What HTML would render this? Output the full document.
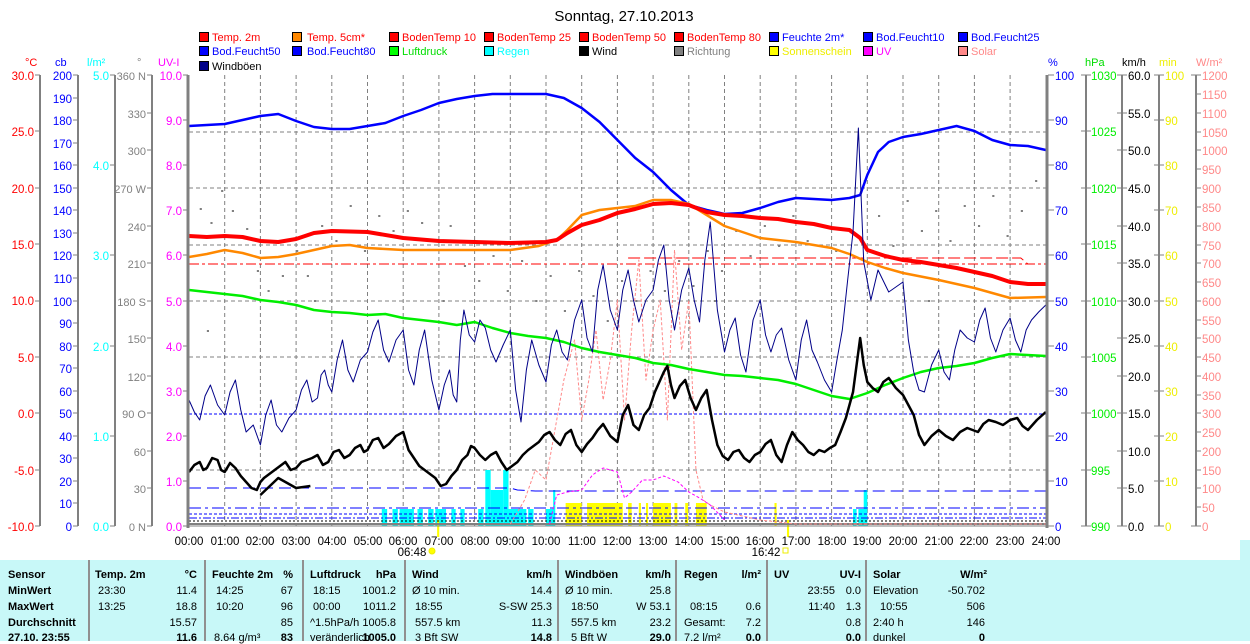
<!DOCTYPE html>
<html><head><meta charset="utf-8"><style>
body{margin:0;background:#fff;width:1250px;height:641px;overflow:hidden;font-family:"Liberation Sans",sans-serif}
svg text{font-family:"Liberation Sans",sans-serif}
.tb{position:absolute;left:0;top:560px;width:1240px;height:81px;background:#c8f8f8;font-size:11px}
.tb div{position:absolute;white-space:nowrap}
.tb div.r{transform:translateX(-100%)}
.b{font-weight:bold}
</style></head><body>
<svg width="1250" height="641" style="position:absolute;left:0;top:0" font-size="11">
<text x="624" y="21" text-anchor="middle" style="font-size:15px">Sonntag, 27.10.2013</text>
<g>
<g stroke="#000" stroke-width="1">
<rect x="199.5" y="32.5" width="9" height="9" fill="#f00"/><rect x="292.5" y="32.5" width="9" height="9" fill="#f80"/><rect x="389.5" y="32.5" width="9" height="9" fill="#f00"/><rect x="484.5" y="32.5" width="9" height="9" fill="#f00"/><rect x="579.5" y="32.5" width="9" height="9" fill="#f00"/><rect x="674.5" y="32.5" width="9" height="9" fill="#f00"/><rect x="769.5" y="32.5" width="9" height="9" fill="#00f"/><rect x="863.5" y="32.5" width="9" height="9" fill="#00f"/><rect x="958.5" y="32.5" width="9" height="9" fill="#00f"/>
<rect x="199.5" y="46.5" width="9" height="9" fill="#00f"/><rect x="292.5" y="46.5" width="9" height="9" fill="#00f"/><rect x="389.5" y="46.5" width="9" height="9" fill="#0f0"/><rect x="484.5" y="46.5" width="9" height="9" fill="#0ff"/><rect x="579.5" y="46.5" width="9" height="9" fill="#000"/><rect x="674.5" y="46.5" width="9" height="9" fill="#808080"/><rect x="769.5" y="46.5" width="9" height="9" fill="#ff0"/><rect x="863.5" y="46.5" width="9" height="9" fill="#f0f"/><rect x="958.5" y="46.5" width="9" height="9" fill="#f88"/>
<rect x="199.5" y="61.5" width="9" height="9" fill="#008"/></g>
<text x="212" y="41" fill="#f00">Temp. 2m</text><text x="307" y="41" fill="#f00">Temp. 5cm*</text><text x="402" y="41" fill="#f00">BodenTemp 10</text><text x="497" y="41" fill="#f00">BodenTemp 25</text><text x="592" y="41" fill="#f00">BodenTemp 50</text><text x="687" y="41" fill="#f00">BodenTemp 80</text><text x="782" y="41" fill="#00f">Feuchte 2m*</text><text x="876" y="41" fill="#00f">Bod.Feucht10</text><text x="971" y="41" fill="#00f">Bod.Feucht25</text>
<text x="212" y="55" fill="#00f">Bod.Feucht50</text><text x="307" y="55" fill="#00f">Bod.Feucht80</text><text x="402" y="55" fill="#0d0">Luftdruck</text><text x="497" y="55" fill="#0ff">Regen</text><text x="592" y="55" fill="#000">Wind</text><text x="687" y="55" fill="#808080">Richtung</text><text x="782" y="55" fill="#ee0">Sonnenschein</text><text x="876" y="55" fill="#f0f">UV</text><text x="971" y="55" fill="#f88">Solar</text>
<text x="212" y="70" fill="#000">Windböen</text>
</g>
<text x="25" y="66" fill="#f00">°C</text><text x="55" y="66" fill="#00f">cb</text><text x="87" y="66" fill="#0ff">l/m²</text><text x="137" y="66" fill="#808080">°</text><text x="158" y="66" fill="#f0f">UV-I</text>
<text x="1048" y="66" fill="#00f">%</text><text x="1085" y="66" fill="#0d0">hPa</text><text x="1122" y="66" fill="#000">km/h</text><text x="1159" y="66" fill="#ee0">min</text><text x="1196" y="66" fill="#f88">W/m²</text>
<g stroke="#808080" stroke-width="2"><line x1="40" y1="75" x2="40" y2="526"/><line x1="78" y1="75" x2="78" y2="526"/><line x1="115" y1="75" x2="115" y2="526"/><line x1="152" y1="75" x2="152" y2="526"/><line x1="1086" y1="75" x2="1086" y2="526"/><line x1="1122" y1="75" x2="1122" y2="526"/><line x1="1159" y1="75" x2="1159" y2="526"/><line x1="1196" y1="75" x2="1196" y2="526"/></g>
<g stroke="#808080" stroke-dasharray="4,3" stroke-width="1">
<line x1="189" y1="132" x2="1046" y2="132"/><line x1="189" y1="188" x2="1046" y2="188"/><line x1="189" y1="245" x2="1046" y2="245"/><line x1="189" y1="301" x2="1046" y2="301"/><line x1="189" y1="357" x2="1046" y2="357"/><line x1="189" y1="470" x2="1046" y2="470"/>
</g>
<line x1="189" y1="414" x2="1046" y2="414" stroke="#00f" stroke-dasharray="3,2"/>
<g transform="translate(189,0) scale(35.7,1)" fill="none" stroke-linejoin="round">
<g stroke="#808080" stroke-dasharray="4,3">
<line x1="1" y1="75" x2="1" y2="526" vector-effect="non-scaling-stroke"/><line x1="2" y1="75" x2="2" y2="526" vector-effect="non-scaling-stroke"/><line x1="3" y1="75" x2="3" y2="526" vector-effect="non-scaling-stroke"/><line x1="4" y1="75" x2="4" y2="526" vector-effect="non-scaling-stroke"/><line x1="5" y1="75" x2="5" y2="526" vector-effect="non-scaling-stroke"/><line x1="6" y1="75" x2="6" y2="526" vector-effect="non-scaling-stroke"/><line x1="7" y1="75" x2="7" y2="526" vector-effect="non-scaling-stroke"/><line x1="8" y1="75" x2="8" y2="526" vector-effect="non-scaling-stroke"/><line x1="9" y1="75" x2="9" y2="526" vector-effect="non-scaling-stroke"/><line x1="10" y1="75" x2="10" y2="526" vector-effect="non-scaling-stroke"/><line x1="11" y1="75" x2="11" y2="526" vector-effect="non-scaling-stroke"/><line x1="12" y1="75" x2="12" y2="526" vector-effect="non-scaling-stroke"/><line x1="13" y1="75" x2="13" y2="526" vector-effect="non-scaling-stroke"/><line x1="14" y1="75" x2="14" y2="526" vector-effect="non-scaling-stroke"/><line x1="15" y1="75" x2="15" y2="526" vector-effect="non-scaling-stroke"/><line x1="16" y1="75" x2="16" y2="526" vector-effect="non-scaling-stroke"/><line x1="17" y1="75" x2="17" y2="526" vector-effect="non-scaling-stroke"/><line x1="18" y1="75" x2="18" y2="526" vector-effect="non-scaling-stroke"/><line x1="19" y1="75" x2="19" y2="526" vector-effect="non-scaling-stroke"/><line x1="20" y1="75" x2="20" y2="526" vector-effect="non-scaling-stroke"/><line x1="21" y1="75" x2="21" y2="526" vector-effect="non-scaling-stroke"/><line x1="22" y1="75" x2="22" y2="526" vector-effect="non-scaling-stroke"/><line x1="23" y1="75" x2="23" y2="526" vector-effect="non-scaling-stroke"/>
</g>
<g fill="#808080" stroke="none">
<rect x="0.3" y="208" width="0.06" height="2"/><rect x="0.6" y="222" width="0.06" height="2"/><rect x="0.9" y="190" width="0.06" height="2"/><rect x="1.2" y="210" width="0.06" height="2"/><rect x="1.6" y="228" width="0.06" height="2"/><rect x="1.9" y="270" width="0.06" height="2"/><rect x="2.2" y="290" width="0.06" height="2"/><rect x="2.6" y="275" width="0.06" height="2"/><rect x="3" y="250" width="0.06" height="2"/><rect x="3.3" y="275" width="0.06" height="2"/><rect x="3.7" y="225" width="0.06" height="2"/><rect x="4.1" y="240" width="0.06" height="2"/><rect x="4.5" y="205" width="0.06" height="2"/><rect x="4.9" y="250" width="0.06" height="2"/><rect x="5.3" y="215" width="0.06" height="2"/><rect x="5.7" y="230" width="0.06" height="2"/><rect x="6.1" y="210" width="0.06" height="2"/><rect x="6.5" y="222" width="0.06" height="2"/><rect x="6.9" y="240" width="0.06" height="2"/><rect x="7.3" y="225" width="0.06" height="2"/><rect x="7.7" y="265" width="0.06" height="2"/><rect x="8.1" y="280" width="0.06" height="2"/><rect x="8.5" y="255" width="0.06" height="2"/><rect x="8.9" y="290" width="0.06" height="2"/><rect x="9.3" y="260" width="0.06" height="2"/><rect x="9.7" y="300" width="0.06" height="2"/><rect x="10.1" y="275" width="0.06" height="2"/><rect x="10.5" y="310" width="0.06" height="2"/><rect x="10.9" y="270" width="0.06" height="2"/><rect x="11.3" y="295" width="0.06" height="2"/><rect x="11.7" y="320" width="0.06" height="2"/><rect x="12.1" y="280" width="0.06" height="2"/><rect x="12.5" y="300" width="0.06" height="2"/><rect x="12.9" y="270" width="0.06" height="2"/><rect x="13.3" y="290" width="0.06" height="2"/><rect x="13.7" y="260" width="0.06" height="2"/><rect x="14.1" y="285" width="0.06" height="2"/><rect x="14.5" y="250" width="0.06" height="2"/><rect x="14.9" y="270" width="0.06" height="2"/><rect x="15.3" y="230" width="0.06" height="2"/><rect x="15.7" y="255" width="0.06" height="2"/><rect x="16.1" y="225" width="0.06" height="2"/><rect x="16.5" y="245" width="0.06" height="2"/><rect x="16.9" y="215" width="0.06" height="2"/><rect x="17.3" y="240" width="0.06" height="2"/><rect x="17.7" y="225" width="0.06" height="2"/><rect x="18.1" y="250" width="0.06" height="2"/><rect x="18.5" y="230" width="0.06" height="2"/><rect x="18.9" y="180" width="0.06" height="2"/><rect x="19.3" y="215" width="0.06" height="2"/><rect x="19.7" y="245" width="0.06" height="2"/><rect x="20.1" y="200" width="0.06" height="2"/><rect x="20.5" y="230" width="0.06" height="2"/><rect x="20.9" y="210" width="0.06" height="2"/><rect x="21.3" y="240" width="0.06" height="2"/><rect x="21.7" y="205" width="0.06" height="2"/><rect x="22.1" y="225" width="0.06" height="2"/><rect x="22.5" y="195" width="0.06" height="2"/><rect x="22.9" y="235" width="0.06" height="2"/><rect x="23.3" y="210" width="0.06" height="2"/><rect x="23.7" y="180" width="0.06" height="2"/><rect x="0.5" y="330" width="0.06" height="2"/><rect x="3.5" y="300" width="0.06" height="2"/><rect x="7.1" y="300" width="0.06" height="2"/><rect x="14.7" y="300" width="0.06" height="2"/><rect x="20.7" y="300" width="0.06" height="2"/>
</g>
<g fill="#0ff" stroke="none">
<rect x="5.4" y="509" width="0.15" height="17"/><rect x="5.7" y="509" width="0.15" height="17"/><rect x="5.9" y="509" width="0.4" height="17"/><rect x="6.4" y="509" width="0.15" height="17"/><rect x="6.7" y="509" width="0.15" height="17"/><rect x="6.9" y="509" width="0.3" height="17"/><rect x="7.35" y="509" width="0.12" height="17"/><rect x="7.6" y="509" width="0.12" height="17"/><rect x="8.1" y="509" width="0.15" height="17"/><rect x="8.3" y="470" width="0.15" height="56"/><rect x="8.45" y="490" width="0.35" height="36"/><rect x="8.8" y="470" width="0.15" height="56"/><rect x="8.95" y="509" width="0.5" height="17"/><rect x="9.5" y="509" width="0.15" height="17"/><rect x="10.0" y="509" width="0.25" height="17"/><rect x="10.2" y="490" width="0.06" height="36"/><rect x="18.6" y="509" width="0.1" height="17"/><rect x="18.75" y="509" width="0.2" height="17"/><rect x="18.9" y="490" width="0.1" height="36"/></g>
<g fill="#ff0" stroke="none">
<rect x="10.55" y="503" width="0.45" height="23"/><rect x="11.15" y="503" width="1.0" height="23"/><rect x="12.3" y="503" width="0.1" height="23"/><rect x="12.6" y="503" width="0.06" height="23"/><rect x="12.8" y="503" width="0.06" height="23"/><rect x="13.0" y="503" width="0.5" height="23"/><rect x="13.6" y="503" width="0.08" height="23"/><rect x="13.9" y="503" width="0.08" height="23"/><rect x="14.2" y="503" width="0.3" height="23"/><rect x="16.4" y="503" width="0.06" height="23"/><rect x="16.75" y="520" width="0.06" height="17"/><rect x="6.95" y="520" width="0.06" height="17"/></g>
<g stroke="#00f">
<polyline points="0,488 9,488 9.2,490 9.7,491 24,491" stroke-dasharray="12,6" vector-effect="non-scaling-stroke"/>
<line x1="0" y1="508" x2="24" y2="508" stroke-dasharray="12,4,3,4" vector-effect="non-scaling-stroke"/>
<line x1="0" y1="514" x2="24" y2="514" stroke-dasharray="3,2" vector-effect="non-scaling-stroke"/>
<line x1="0" y1="518" x2="24" y2="518" stroke-dasharray="8,2,2,2" vector-effect="non-scaling-stroke"/>
</g>
<line x1="0" y1="521" x2="24" y2="521" stroke="#000" stroke-dasharray="2,2" vector-effect="non-scaling-stroke"/>
<line x1="0" y1="524" x2="24" y2="524" stroke="#808080" stroke-width="2" vector-effect="non-scaling-stroke"/>
<polyline stroke="#f88" stroke-dasharray="3,2" vector-effect="non-scaling-stroke" points="9,524 9.4,500 9.7,470 10,480 10.2,440 10.5,380 10.8,340 11,420 11.2,380 11.4,330 11.6,400 11.8,360 12,300 12.2,420 12.4,330 12.6,260 12.8,380 13,330 13.2,300 13.4,420 13.6,250 13.8,350 14,300 14.2,470 14.4,500 14.6,505 15,512 15.5,516 16,520 16.5,522 17,524 24,524"/>
<polyline stroke="#f0f" stroke-dasharray="3,2" vector-effect="non-scaling-stroke" points="10.1,524 10.3,495 10.6,492 11,490 11.3,475 11.6,468 12,472 12.2,498 12.4,492 12.7,480 13,480 13.3,476 13.7,482 14,492 14.3,498 14.6,505 15,520"/>
<polyline stroke="#0e0" stroke-width="2.5" vector-effect="non-scaling-stroke" points="0,290 0.5,292 1,294 1.5,296 2,300 2.5,302 3,305 3.5,310 4,312 4.5,313 5,315 5.5,314 6,318 6.5,320 7,322 7.5,325 8,322 8.5,328 9,333 9.5,336 10,338 10.5,342 11,348 11.5,352 12,355 12.5,358 13,363 13.5,365 14,369 14.5,372 15,375 15.5,376 16,378 16.5,380 17,384 17.5,390 18,396 18.5,399 19,393 19.5,385 20,378 20.5,372 21,368 21.5,366 22,363 22.5,358 23,354 24,356"/>
<polyline stroke="#00f" stroke-width="2.5" vector-effect="non-scaling-stroke" points="0,126 0.5,125 1,124 1.5,120 2,116 2.5,114 3,121 3.5,127 4,129 4.5,129 5,126 5.5,123 6,116 6.5,110 7,103 7.5,99 8,96 8.5,94 9,94 9.5,94 10,94 10.5,98 11,108 11.5,122 12,140 12.5,158 13,172 13.5,190 14,205 14.5,210 15,214 15.5,213 16,208 16.5,202 17,198 17.5,199 18,200 18.5,198 18.8,195 19,175 19.3,152 19.6,142 20,137 20.5,134 21,130 21.5,126 22,131 22.5,140 23,145 23.5,146 24,150"/>
<line x1="0" y1="264" x2="24" y2="264" stroke="#f00" stroke-dasharray="10,3,3,3" vector-effect="non-scaling-stroke"/>
<polyline points="12.3,258 23.3,258 23.5,264" stroke="#f00" stroke-dasharray="12,4" vector-effect="non-scaling-stroke"/>
<polyline stroke="#f80" stroke-width="2.5" vector-effect="non-scaling-stroke" points="0,257 0.5,254 1,250 1.5,253 2,258 2.5,257 3,254 3.5,250 4,246 4.5,245 5,248 6,250 7,250 8,250 9,250 9.8,246 10.3,240 10.6,230 11,215 11.5,210 12,208 12.5,206 13,200 13.5,200 14,204 14.5,215 15,226 15.5,232 16,238 17,242 18,248 18.5,254 19,262 19.5,268 20,273 21,280 21.5,284 22,288 22.5,293 23,298 24,297"/>
<polyline stroke="#f00" stroke-width="4" vector-effect="non-scaling-stroke" points="0,236 0.5,237 1,236 1.5,237 2,241 2.5,242 3,239 3.5,233 4,231 5,232 6,238 7,241 8,242 9,243 10,242 10.3,240 10.6,233 11,225 11.5,220 12,213 12.5,209 13,204 13.5,203 14,205 14.5,212 15,215 15.5,216 16,218 16.5,219 17,222 17.5,224 18,228 18.5,230 18.8,238 19,250 19.5,256 20,260 20.5,262 21,265 21.5,268 22,272 22.5,276 23,282 23.5,284 24,284"/>
<polyline stroke="#008" stroke-width="1" vector-effect="non-scaling-stroke" points="0,400 0.15,412 0.3,420 0.45,396 0.6,385 0.8,405 1,415 1.15,392 1.3,380 1.45,410 1.6,432 1.8,425 2,445 2.15,415 2.3,400 2.45,425 2.6,432 2.8,418 3,410 3.15,390 3.3,380 3.45,402 3.6,398 3.7,375 3.8,370 3.9,385 4,392 4.15,360 4.3,340 4.45,370 4.6,382 4.8,360 5,352 5.15,332 5.3,320 5.45,350 5.6,362 5.8,340 6,330 6.15,370 6.3,385 6.45,350 6.6,330 6.8,380 7,410 7.15,385 7.3,370 7.4,395 7.5,402 7.6,340 7.7,310 7.85,335 8,342 8.15,320 8.3,328 8.45,350 8.6,362 8.8,345 9,330 9.15,390 9.3,422 9.45,370 9.6,340 9.8,365 10,382 10.15,345 10.3,330 10.45,352 10.6,360 10.8,320 11,300 11.15,338 11.3,352 11.45,290 11.6,265 11.8,310 12,330 12.15,290 12.3,270 12.45,300 12.6,322 12.8,300 13,290 13.15,260 13.3,245 13.45,300 13.6,330 13.8,290 14,268 14.15,300 14.3,322 14.45,260 14.6,222 14.8,310 15,352 15.15,330 15.3,318 15.45,355 15.6,372 15.8,320 16,300 16.15,335 16.3,352 16.45,335 16.6,328 16.8,360 17,380 17.15,340 17.3,320 17.45,350 17.6,362 17.8,380 18,392 18.15,360 18.3,330 18.45,280 18.6,232 18.75,128 18.9,262 19.1,300 19.3,270 19.6,292 20,282 20.15,340 20.3,372 20.45,390 20.6,392 20.8,365 21,350 21.15,372 21.3,380 21.45,350 21.6,330 21.8,338 22,342 22.15,320 22.3,308 22.45,338 22.6,352 22.8,330 23,318 23.15,340 23.3,352 23.45,330 23.6,320 23.8,312 24,305"/>
<polyline stroke="#000" stroke-width="2.5" vector-effect="non-scaling-stroke" points="0,472 0.15,465 0.3,462 0.4,470 0.5,468 0.65,458 0.8,460 0.9,470 1,472 1.15,463 1.3,468 1.45,476 1.6,482 1.75,488 1.9,490 2,482 2.1,478 2.25,474 2.4,470 2.55,466 2.7,462 2.85,470 3,468 3.15,462 3.3,460 3.45,458 3.6,455 3.75,465 3.9,462 4.05,452 4.2,450 4.35,458 4.5,455 4.65,448 4.8,445 4.9,452 5,450 5.15,440 5.3,438 5.45,448 5.6,444 5.8,436 6,432 6.15,450 6.3,458 6.45,466 6.6,470 6.75,474 6.9,478 7.05,486 7.2,484 7.35,476 7.5,470 7.65,460 7.8,455 7.9,446 8,448 8.15,455 8.3,460 8.45,455 8.6,452 8.75,462 8.9,470 9.05,466 9.2,462 9.35,455 9.5,450 9.65,446 9.8,442 9.95,435 10.1,432 10.25,440 10.4,445 10.55,434 10.7,430 10.85,445 11,452 11.15,444 11.3,438 11.45,430 11.6,424 11.8,436 12,442 12.15,415 12.3,405 12.45,425 12.6,430 12.75,415 12.9,408 13.05,392 13.2,380 13.3,372 13.4,366 13.5,385 13.6,398 13.75,386 13.9,380 14.05,398 14.2,410 14.35,398 14.5,390 14.65,420 14.8,445 14.95,456 15.1,460 15.25,452 15.4,450 15.55,458 15.7,462 15.85,455 16,452 16.15,444 16.3,440 16.45,455 16.6,462 16.75,445 16.9,432 17.05,440 17.2,445 17.35,452 17.5,455 17.65,450 17.8,452 17.95,448 18.1,445 18.25,432 18.4,418 18.5,405 18.6,392 18.7,365 18.8,338 18.9,365 19,382 19.15,388 19.3,392 19.45,382 19.6,378 19.8,388 20,395 20.15,405 20.3,415 20.45,435 20.6,445 20.8,436 21,430 21.2,436 21.4,440 21.6,432 21.8,428 21.95,430 22.1,432 22.25,424 22.4,420 22.6,422 22.8,425 23,420 23.2,418 23.35,426 23.5,430 23.75,420 24,412"/>
<polyline stroke="#000" stroke-width="2.5" vector-effect="non-scaling-stroke" points="2,495 2.5,478 3,488 3.4,486"/>
</g>
<line x1="188" y1="75" x2="188" y2="528" stroke="#808080" stroke-width="3"/>
<line x1="1047" y1="75" x2="1047" y2="528" stroke="#808080" stroke-width="3"/>
<line x1="188" y1="526" x2="1047" y2="526" stroke="#808080" stroke-width="1"/>
<g text-anchor="middle" font-size="11.5">
<text x="189" y="545">00:00</text><text x="225" y="545">01:00</text><text x="260" y="545">02:00</text><text x="296" y="545">03:00</text><text x="332" y="545">04:00</text><text x="368" y="545">05:00</text><text x="403" y="545">06:00</text><text x="439" y="545">07:00</text><text x="475" y="545">08:00</text><text x="510" y="545">09:00</text><text x="546" y="545">10:00</text><text x="582" y="545">11:00</text><text x="617" y="545">12:00</text><text x="653" y="545">13:00</text><text x="689" y="545">14:00</text><text x="725" y="545">15:00</text><text x="760" y="545">16:00</text><text x="796" y="545">17:00</text><text x="832" y="545">18:00</text><text x="867" y="545">19:00</text><text x="903" y="545">20:00</text><text x="939" y="545">21:00</text><text x="974" y="545">22:00</text><text x="1010" y="545">23:00</text><text x="1046" y="545">24:00</text>
<text x="412" y="556">06:48</text><text x="766" y="556">16:42</text></g>
<circle cx="432" cy="551" r="3" fill="#ff0" stroke="#ee0"/><rect x="783" y="548" width="5" height="5" fill="none" stroke="#ee0"/>
<rect x="1240" y="540" width="10" height="101" fill="#c8f8f8"/>
<g stroke="#808080"><path d="M35 75h5M35 131h5M35 188h5M35 244h5M35 301h5M35 357h5M35 413h5M35 470h5M35 526h5"/>
<path d="M73 75h5M73 98h5M73 120h5M73 143h5M73 165h5M73 188h5M73 210h5M73 233h5M73 255h5M73 278h5M73 301h5M73 323h5M73 346h5M73 368h5M73 391h5M73 413h5M73 436h5M73 458h5M73 481h5M73 503h5M73 526h5"/>
<path d="M110 75h5M110 165h5M110 255h5M110 346h5M110 436h5M110 526h5"/>
<path d="M147 75h5M147 113h5M147 150h5M147 188h5M147 226h5M147 263h5M147 301h5M147 338h5M147 376h5M147 413h5M147 451h5M147 488h5M147 526h5"/>
<path d="M183 75h5M183 120h5M183 165h5M183 210h5M183 255h5M183 301h5M183 346h5M183 391h5M183 436h5M183 481h5M183 526h5"/>
<path d="M1048 75h6M1048 120h6M1048 165h6M1048 210h6M1048 255h6M1048 301h6M1048 346h6M1048 391h6M1048 436h6M1048 481h6M1048 526h6"/>
<path d="M1081 75h10M1081 131h10M1081 188h10M1081 244h10M1081 301h10M1081 357h10M1081 413h10M1081 470h10M1081 526h10"/>
<path d="M1117 75h10M1117 113h10M1117 150h10M1117 188h10M1117 226h10M1117 263h10M1117 301h10M1117 338h10M1117 376h10M1117 413h10M1117 451h10M1117 488h10M1117 526h10"/>
<path d="M1154 75h10M1154 120h10M1154 165h10M1154 210h10M1154 255h10M1154 301h10M1154 346h10M1154 391h10M1154 436h10M1154 481h10M1154 526h10"/>
<path d="M1191 75h10M1196 94h5M1196 113h5M1196 132h5M1196 150h5M1196 169h5M1196 188h5M1196 207h5M1196 226h5M1196 245h5M1196 263h5M1196 282h5M1196 301h5M1196 320h5M1196 338h5M1196 357h5M1196 376h5M1196 395h5M1196 413h5M1196 432h5M1196 451h5M1196 470h5M1196 488h5M1196 507h5M1191 526h10"/></g>
<g fill="#f00" text-anchor="end" font-size="11.5"><text x="34" y="80">30.0</text><text x="34" y="136">25.0</text><text x="34" y="193">20.0</text><text x="34" y="249">15.0</text><text x="34" y="305">10.0</text><text x="34" y="362">5.0</text><text x="34" y="418">0.0</text><text x="34" y="475">-5.0</text><text x="34" y="531">-10.0</text></g>
<g fill="#00f" text-anchor="end" font-size="11.5"><text x="72" y="80">200</text><text x="72" y="103">190</text><text x="72" y="125">180</text><text x="72" y="148">170</text><text x="72" y="170">160</text><text x="72" y="193">150</text><text x="72" y="215">140</text><text x="72" y="238">130</text><text x="72" y="260">120</text><text x="72" y="283">110</text><text x="72" y="306">100</text><text x="72" y="328">90</text><text x="72" y="351">80</text><text x="72" y="373">70</text><text x="72" y="396">60</text><text x="72" y="418">50</text><text x="72" y="441">40</text><text x="72" y="463">30</text><text x="72" y="486">20</text><text x="72" y="508">10</text><text x="72" y="531">0</text></g>
<g fill="#0ff" text-anchor="end" font-size="11.5"><text x="109" y="80">5.0</text><text x="109" y="170">4.0</text><text x="109" y="260">3.0</text><text x="109" y="351">2.0</text><text x="109" y="441">1.0</text><text x="109" y="531">0.0</text></g>
<g fill="#808080" text-anchor="end" font-size="11"><text x="146" y="80">360 N</text><text x="146" y="118">330</text><text x="146" y="155">300</text><text x="146" y="193">270 W</text><text x="146" y="231">240</text><text x="146" y="268">210</text><text x="146" y="306">180 S</text><text x="146" y="343">150</text><text x="146" y="381">120</text><text x="146" y="418">90 O</text><text x="146" y="456">60</text><text x="146" y="493">30</text><text x="146" y="531">0 N</text></g>
<g fill="#f0f" text-anchor="end" font-size="11.5"><text x="182" y="80">10.0</text><text x="182" y="125">9.0</text><text x="182" y="170">8.0</text><text x="182" y="215">7.0</text><text x="182" y="260">6.0</text><text x="182" y="306">5.0</text><text x="182" y="351">4.0</text><text x="182" y="396">3.0</text><text x="182" y="441">2.0</text><text x="182" y="486">1.0</text><text x="182" y="531">0.0</text></g>
<g fill="#00f" font-size="11.5"><text x="1055" y="80">100</text><text x="1055" y="125">90</text><text x="1055" y="170">80</text><text x="1055" y="215">70</text><text x="1055" y="260">60</text><text x="1055" y="306">50</text><text x="1055" y="351">40</text><text x="1055" y="396">30</text><text x="1055" y="441">20</text><text x="1055" y="486">10</text><text x="1055" y="531">0</text></g>
<g fill="#0e0" font-size="11.5"><text x="1091" y="80">1030</text><text x="1091" y="136">1025</text><text x="1091" y="193">1020</text><text x="1091" y="249">1015</text><text x="1091" y="306">1010</text><text x="1091" y="362">1005</text><text x="1091" y="418">1000</text><text x="1091" y="475">995</text><text x="1091" y="531">990</text></g>
<g fill="#000" font-size="11.5"><text x="1128" y="80">60.0</text><text x="1128" y="118">55.0</text><text x="1128" y="155">50.0</text><text x="1128" y="193">45.0</text><text x="1128" y="231">40.0</text><text x="1128" y="268">35.0</text><text x="1128" y="306">30.0</text><text x="1128" y="343">25.0</text><text x="1128" y="381">20.0</text><text x="1128" y="418">15.0</text><text x="1128" y="456">10.0</text><text x="1128" y="493">5.0</text><text x="1128" y="531">0.0</text></g>
<g fill="#ee0" font-size="11.5"><text x="1165" y="80">100</text><text x="1165" y="125">90</text><text x="1165" y="170">80</text><text x="1165" y="215">70</text><text x="1165" y="260">60</text><text x="1165" y="306">50</text><text x="1165" y="351">40</text><text x="1165" y="396">30</text><text x="1165" y="441">20</text><text x="1165" y="486">10</text><text x="1165" y="531">0</text></g>
<g fill="#f88" font-size="11.5"><text x="1202" y="80">1200</text><text x="1202" y="99">1150</text><text x="1202" y="118">1100</text><text x="1202" y="137">1050</text><text x="1202" y="155">1000</text><text x="1202" y="174">950</text><text x="1202" y="193">900</text><text x="1202" y="212">850</text><text x="1202" y="231">800</text><text x="1202" y="250">750</text><text x="1202" y="268">700</text><text x="1202" y="287">650</text><text x="1202" y="306">600</text><text x="1202" y="325">550</text><text x="1202" y="343">500</text><text x="1202" y="362">450</text><text x="1202" y="381">400</text><text x="1202" y="400">350</text><text x="1202" y="418">300</text><text x="1202" y="437">250</text><text x="1202" y="456">200</text><text x="1202" y="475">150</text><text x="1202" y="493">100</text><text x="1202" y="512">50</text><text x="1202" y="531">0</text></g>
</svg>
<div class="tb">
<svg width="1240" height="81" style="position:absolute;left:0;top:0"><g stroke="#909090" stroke-width="2"><line x1="89" y1="0" x2="89" y2="81"/><line x1="205" y1="0" x2="205" y2="81"/><line x1="303" y1="0" x2="303" y2="81"/><line x1="405" y1="0" x2="405" y2="81"/><line x1="558" y1="0" x2="558" y2="81"/><line x1="676" y1="0" x2="676" y2="81"/><line x1="767" y1="0" x2="767" y2="81"/><line x1="866" y1="0" x2="866" y2="81"/></g></svg>
<div class="b" style="left:8px;top:9px">Sensor</div><div class="b" style="left:8px;top:25px">MinWert</div><div class="b" style="left:8px;top:41px">MaxWert</div><div class="b" style="left:8px;top:57px">Durchschnitt</div><div class="b" style="left:8px;top:72px">27.10. 23:55</div>
<div class="b" style="left:95px;top:9px">Temp. 2m</div><div class="b r" style="left:197px;top:9px">°C</div>
<div style="left:98px;top:25px">23:30</div><div class="r" style="left:197px;top:25px">11.4</div><div style="left:98px;top:41px">13:25</div><div class="r" style="left:197px;top:41px">18.8</div><div class="r" style="left:197px;top:57px">15.57</div><div class="b r" style="left:197px;top:72px">11.6</div>
<div class="b" style="left:212px;top:9px">Feuchte 2m</div><div class="b r" style="left:293px;top:9px">%</div>
<div style="left:216px;top:25px">14:25</div><div class="r" style="left:293px;top:25px">67</div><div style="left:216px;top:41px">10:20</div><div class="r" style="left:293px;top:41px">96</div><div class="r" style="left:293px;top:57px">85</div><div style="left:214px;top:72px">8.64 g/m³</div><div class="b r" style="left:293px;top:72px">83</div>
<div class="b" style="left:310px;top:9px">Luftdruck</div><div class="b r" style="left:396px;top:9px">hPa</div>
<div style="left:313px;top:25px">18:15</div><div class="r" style="left:396px;top:25px">1001.2</div><div style="left:313px;top:41px">00:00</div><div class="r" style="left:396px;top:41px">1011.2</div><div style="left:310px;top:57px">^1.5hPa/h</div><div class="r" style="left:396px;top:57px">1005.8</div><div style="left:310px;top:72px">veränderlich</div><div class="b r" style="left:396px;top:72px">1005.0</div>
<div class="b" style="left:412px;top:9px">Wind</div><div class="b r" style="left:552px;top:9px">km/h</div>
<div style="left:412px;top:25px">Ø 10 min.</div><div class="r" style="left:552px;top:25px">14.4</div><div style="left:415px;top:41px">18:55</div><div class="r" style="left:552px;top:41px">S-SW 25.3</div><div style="left:415px;top:57px">557.5 km</div><div class="r" style="left:552px;top:57px">11.3</div><div style="left:415px;top:72px">3 Bft SW</div><div class="b r" style="left:552px;top:72px">14.8</div>
<div class="b" style="left:565px;top:9px">Windböen</div><div class="b r" style="left:671px;top:9px">km/h</div>
<div style="left:565px;top:25px">Ø 10 min.</div><div class="r" style="left:671px;top:25px">25.8</div><div style="left:571px;top:41px">18:50</div><div class="r" style="left:671px;top:41px">W 53.1</div><div style="left:571px;top:57px">557.5 km</div><div class="r" style="left:671px;top:57px">23.2</div><div style="left:571px;top:72px">5 Bft W</div><div class="b r" style="left:671px;top:72px">29.0</div>
<div class="b" style="left:684px;top:9px">Regen</div><div class="b r" style="left:761px;top:9px">l/m²</div>
<div style="left:690px;top:41px">08:15</div><div class="r" style="left:761px;top:41px">0.6</div><div style="left:684px;top:57px">Gesamt:</div><div class="r" style="left:761px;top:57px">7.2</div><div style="left:684px;top:72px">7.2 l/m²</div><div class="b r" style="left:761px;top:72px">0.0</div>
<div class="b" style="left:774px;top:9px">UV</div><div class="b r" style="left:861px;top:9px">UV-I</div>
<div class="r" style="left:835px;top:25px">23:55</div><div class="r" style="left:861px;top:25px">0.0</div><div class="r" style="left:835px;top:41px">11:40</div><div class="r" style="left:861px;top:41px">1.3</div><div class="r" style="left:861px;top:57px">0.8</div><div class="b r" style="left:861px;top:72px">0.0</div>
<div class="b" style="left:873px;top:9px">Solar</div><div class="b r" style="left:987px;top:9px">W/m²</div>
<div style="left:873px;top:25px">Elevation</div><div class="r" style="left:985px;top:25px">-50.702</div><div style="left:880px;top:41px">10:55</div><div class="r" style="left:985px;top:41px">506</div><div style="left:873px;top:57px">2:40 h</div><div class="r" style="left:985px;top:57px">146</div><div style="left:873px;top:72px">dunkel</div><div class="b r" style="left:985px;top:72px">0</div>
</div>
</body></html>
